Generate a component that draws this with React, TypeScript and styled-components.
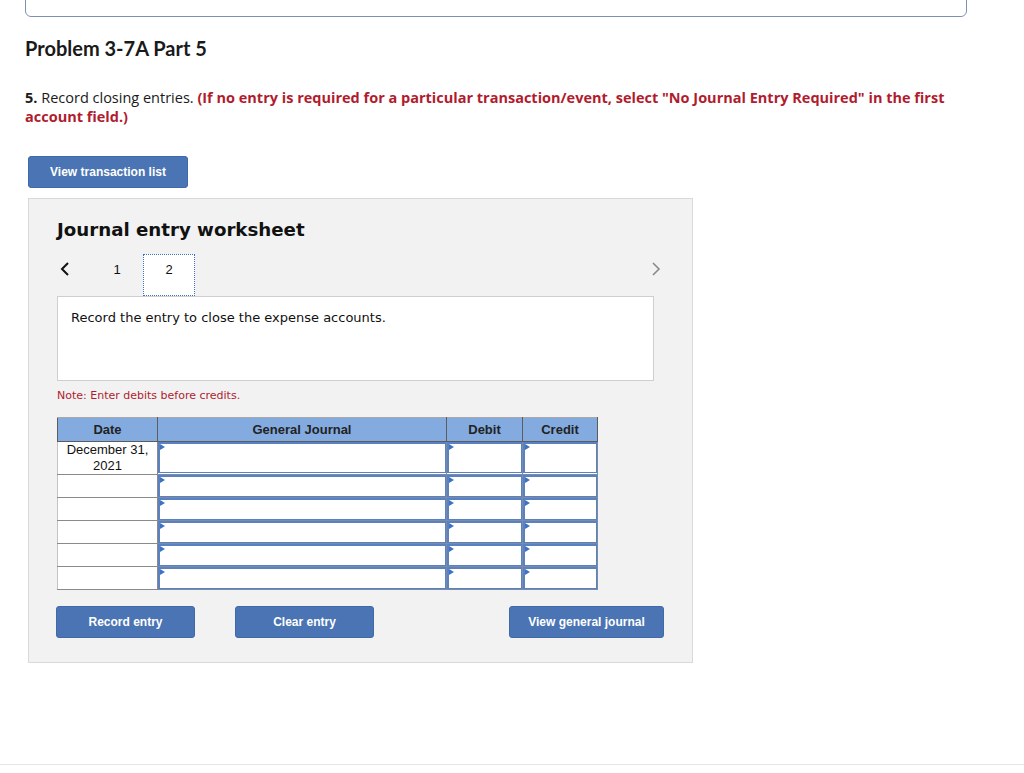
import React from 'react';
import styled, { createGlobalStyle } from 'styled-components';

const GlobalStyle = createGlobalStyle`
  body {
    margin: 0;
    background: #ffffff;
    font-family: Lato, "Liberation Sans", Arial, sans-serif;
    color: #1a1a1a;
  }
`;

const Page = styled.div`
  min-height: 773px;
  display: flex;
  flex-direction: column;
  overflow: hidden;
`;

const Main = styled.div`
  padding: 0 57px 0 25px;
  flex: 1;
`;

const TopBox = styled.div`
  margin-top: -30px;
  width: 940px;
  height: 45px;
  border: 1px solid #7d90b6;
  border-radius: 6px;
`;

const Heading = styled.h2`
  margin: 19px 0 0;
  font-size: 20px;
  font-weight: 700;
  line-height: 24px;
  color: #1a1a1a;
`;

const Instructions = styled.p`
  margin: 28px 0 0;
  width: 940px;
  font-family: "Open Sans", Lato, sans-serif;
  font-size: 14.5px;
  line-height: 19px;
  color: #1a1a1a;
`;

const Strong = styled.strong`
  font-weight: 700;
`;

const Plain = styled.span`
  font-weight: 400;
`;

const Warning = styled.strong`
  font-weight: 700;
  color: #b01c2e;
`;

const BlueButton = styled.button<{ $width: number }>`
  width: ${({ $width }) => $width}px;
  height: 32px;
  border: 1px solid #3f69a8;
  border-radius: 3px;
  background: #4a74b3;
  color: #ffffff;
  font-family: "Liberation Sans", Arial, sans-serif;
  font-size: 12px;
  font-weight: 700;
  cursor: pointer;
`;

const TopButtonRow = styled.div`
  margin: 30px 0 0 3px;
  height: 32px;
`;

const Worksheet = styled.section`
  margin: 10px 0 0 3px;
  width: 665px;
  box-sizing: border-box;
  background: #f2f2f2;
  border: 1px solid #d9d9d9;
  padding: 19px 38px 24px 28px;
`;

const WorksheetTitle = styled.h3`
  margin: 0;
  font-family: "DejaVu Sans", Verdana, sans-serif;
  font-size: 18.2px;
  font-weight: 700;
  line-height: 24px;
  color: #111;
`;

const NavRow = styled.div`
  display: flex;
  align-items: flex-start;
  height: 42px;
  margin: 12px -10px 0 0;
`;

const Arrow = styled.span<{ $muted?: boolean }>`
  display: flex;
  align-items: center;
  justify-content: center;
  width: 16px;
  height: 16px;
  margin-top: 7px;
  color: ${({ $muted }) => ($muted ? '#8a8a8a' : '#111')};
`;

const PageNum = styled.span<{ $active?: boolean }>`
  display: flex;
  justify-content: center;
  box-sizing: border-box;
  width: ${({ $active }) => ($active ? '52px' : '40px')};
  height: 42px;
  padding-top: 7px;
  font-family: "Liberation Sans", Arial, sans-serif;
  font-size: 13px;
  line-height: 16px;
  color: #111;
  background: ${({ $active }) => ($active ? '#ffffff' : 'transparent')};
  border: 1px dotted ${({ $active }) => ($active ? '#3f6fc0' : 'transparent')};
  margin-left: ${({ $active }) => ($active ? '6px' : '24px')};
`;

const Spacer = styled.div`
  flex: 1;
`;

const Description = styled.div`
  height: 85px;
  box-sizing: border-box;
  background: #ffffff;
  border: 1px solid #cfcfcf;
  padding: 13px 13px;
  font-family: "DejaVu Sans", Verdana, sans-serif;
  font-size: 13px;
  color: #111;
`;

const Note = styled.p`
  margin: 8px 0 0;
  font-family: "DejaVu Sans", Verdana, sans-serif;
  font-size: 11px;
  line-height: 14px;
  color: #b01c2e;
`;

const Table = styled.table`
  margin-top: 14px;
  border-collapse: collapse;
  table-layout: fixed;
  width: 541px;
  font-family: "Liberation Sans", Arial, sans-serif;
`;

const HeadCell = styled.th<{ $width: number }>`
  width: ${({ $width }) => $width}px;
  height: 23px;
  padding: 0;
  background: #84abe0;
  border: 1px solid #5c5c5c;
  border-top-color: #a8a8a8;
  font-size: 13px;
  font-weight: 700;
  color: #222;
`;

const DateCell = styled.td<{ $tall?: boolean }>`
  height: ${({ $tall }) => ($tall ? 30 : 21)}px;
  padding: 0;
  background: #ffffff;
  border: 1px solid #8a8a8a;
  border-left-color: #c4c4c4;
  font-size: 13px;
  line-height: 16px;
  text-align: center;
  vertical-align: top;
  color: #111;
`;

const InputCell = styled.td`
  padding: 0;
  background: #ffffff;
  border: 1px solid #7c8aa3;
  vertical-align: top;
`;

const InputBox = styled.div<{ $tall?: boolean }>`
  position: relative;
  height: ${({ $tall }) => ($tall ? 28 : 19)}px;
  background: #ffffff;
  border: 1px solid #5a82c2;
  border-top-width: 2px;
  border-left-width: 2px;
`;

const Marker = styled.span`
  position: absolute;
  top: 0;
  left: 0;
  width: 0;
  height: 0;
  border-top: 3px solid transparent;
  border-bottom: 3px solid transparent;
  border-left: 5px solid #3f72c4;
`;

const ActionRow = styled.div`
  display: flex;
  align-items: center;
  margin: 16px 0 0 -1px;
  width: 608px;
`;

const Gap = styled.div<{ $w?: number }>`
  width: ${({ $w }) => ($w ? `${$w}px` : 'auto')};
  flex: ${({ $w }) => ($w ? 'none' : 1)};
`;

const Footer = styled.div`
  height: 8px;
  border-top: 1px solid #e6e6e6;
`;

const Chevron: React.FC<{ dir: 'left' | 'right' }> = ({ dir }) => (
  <svg width="10" height="16" viewBox="0 0 10 16" fill="none">
    <path
      d={dir === 'left' ? 'M8 2 L2 8 L8 14' : 'M2 2 L8 8 L2 14'}
      stroke="currentColor"
      strokeWidth={dir === 'left' ? 2 : 1.6}
    />
  </svg>
);

const rows = [true, false, false, false, false, false];

const App: React.FC = () => {
  return (
    <Page>
      <GlobalStyle />
      <Main>
        <TopBox />
        <Heading>Problem 3-7A Part 5</Heading>
        <Instructions>
          <Strong>5.</Strong> <Plain>Record closing entries.</Plain>{' '}
          <Warning>
            (If no entry is required for a particular transaction/event, select "No Journal Entry
            Required" in the first
          </Warning>
          <br />
          <Warning>account field.)</Warning>
        </Instructions>
        <TopButtonRow>
          <BlueButton $width={160}>View transaction list</BlueButton>
        </TopButtonRow>

        <Worksheet>
          <WorksheetTitle>Journal entry worksheet</WorksheetTitle>
          <NavRow>
            <Arrow>
              <Chevron dir="left" />
            </Arrow>
            <PageNum>1</PageNum>
            <PageNum $active>2</PageNum>
            <Spacer />
            <Arrow $muted>
              <Chevron dir="right" />
            </Arrow>
          </NavRow>
          <Description>Record the entry to close the expense accounts.</Description>
          <Note>Note: Enter debits before credits.</Note>

          <Table>
            <thead>
              <tr>
                <HeadCell $width={99}>Date</HeadCell>
                <HeadCell $width={288}>General Journal</HeadCell>
                <HeadCell $width={75}>Debit</HeadCell>
                <HeadCell $width={74}>Credit</HeadCell>
              </tr>
            </thead>
            <tbody>
              {rows.map((tall, i) => (
                <tr key={i}>
                  <DateCell $tall={tall}>
                    {tall && (
                      <>
                        December 31,
                        <br />
                        2021
                      </>
                    )}
                  </DateCell>
                  {[0, 1, 2].map((c) => (
                    <InputCell key={c}>
                      <InputBox $tall={tall}>
                        <Marker />
                      </InputBox>
                    </InputCell>
                  ))}
                </tr>
              ))}
            </tbody>
          </Table>

          <ActionRow>
            <BlueButton $width={139}>Record entry</BlueButton>
            <Gap $w={40} />
            <BlueButton $width={139}>Clear entry</BlueButton>
            <Gap />
            <BlueButton $width={155}>View general journal</BlueButton>
          </ActionRow>
        </Worksheet>
      </Main>
      <Footer />
    </Page>
  );
};

export default App;
